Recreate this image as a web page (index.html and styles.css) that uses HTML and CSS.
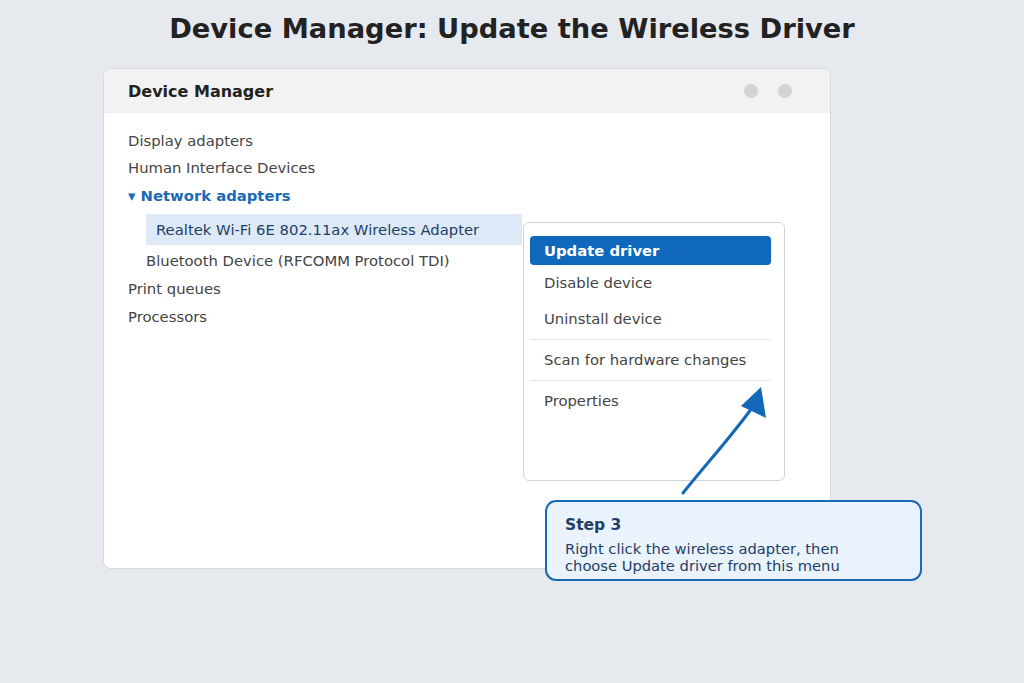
FILE: index.html
```html
<!DOCTYPE html>
<html>
<head>
<meta charset="utf-8">
<link rel="stylesheet" href="styles.css">
</head>
<body>
<h1 class="title">Device Manager: Update the Wireless Driver</h1>
<div class="stage">
  <div class="window">
    <div class="win-header">
      <span class="win-title">Device Manager</span>
      <span class="dots"><span class="dot"></span><span class="dot"></span></span>
    </div>
    <div class="tree">
      <div class="item">Display adapters</div>
      <div class="item">Human Interface Devices</div>
      <div class="item open">▾ Network adapters</div>
      <div class="child selected">Realtek Wi-Fi 6E 802.11ax Wireless Adapter</div>
      <div class="child after-selected">Bluetooth Device (RFCOMM Protocol TDI)</div>
      <div class="item">Print queues</div>
      <div class="item">Processors</div>
    </div>
    <div class="menu">
      <div class="menu-item active">Update driver</div>
      <div class="menu-item">Disable device</div>
      <div class="menu-item">Uninstall device</div>
      <div class="sep"></div>
      <div class="menu-item">Scan for hardware changes</div>
      <div class="sep"></div>
      <div class="menu-item">Properties</div>
    </div>
  </div>
  <svg class="arrow" width="1024" height="683" viewBox="0 0 1024 683">
    <path d="M683 493 C 708 462, 730 438, 752 408" fill="none" stroke="#1468b8" stroke-width="3" stroke-linecap="round"/>
    <polygon points="761,387 766,418 741,406" fill="#1468b8"/>
  </svg>
  <div class="callout">
    <div class="callout-title">Step 3</div>
    <div class="callout-text">Right click the wireless adapter, then<br>choose Update driver from this menu</div>
  </div>
</div>
</body>
</html>
```
FILE: styles.css
```css
html, body {
  margin: 0;
  padding: 0;
}
body {
  background: #e6e9ee;
  font-family: "DejaVu Sans", sans-serif;
  width: 1024px;
  height: 683px;
  overflow: hidden;
  position: relative;
}
.title {
  margin: 0;
  padding-top: 12px;
  text-align: center;
  font-size: 27.3px;
  line-height: 34px;
  font-weight: bold;
  color: #222222;
}
.stage {
  padding-left: 103px;
  padding-top: 22px;
}
.window {
  position: relative;
  width: 728px;
  height: 501px;
  background: #ffffff;
  border: 1px solid #d6d9de;
  border-radius: 8px;
  overflow: hidden;
  box-sizing: border-box;
}
.win-header {
  height: 44px;
  background: #f2f2f2;
  display: flex;
  align-items: center;
  justify-content: space-between;
  padding: 0 38px 0 24px;
}
.win-title {
  font-size: 16px;
  font-weight: bold;
  color: #222222;
}
.dots {
  display: flex;
  gap: 20px;
}
.dot {
  width: 14px;
  height: 14px;
  border-radius: 50%;
  background: #d3d3d3;
}
.tree {
  padding: 13.5px 0 0 24px;
  font-size: 14.8px;
  color: #444444;
}
.item {
  height: 27.5px;
  line-height: 27.5px;
}
.item.open {
  color: #1a6ab8;
  font-weight: bold;
}
.child {
  margin-left: 18px;
  height: 28px;
  line-height: 28px;
}
.child.selected {
  width: 376px;
  height: 31px;
  line-height: 31px;
  margin-top: 5px;
  padding-left: 10px;
  box-sizing: border-box;
  background: #dde9f7;
  color: #1f3f66;
}
.child.after-selected {
  margin-top: 2px;
}
.menu {
  position: absolute;
  left: 419px;
  top: 153px;
  width: 262px;
  height: 259px;
  box-sizing: border-box;
  background: #ffffff;
  border: 1px solid #cfd2d6;
  border-radius: 6px;
  padding: 13px 13px 0 6px;
  font-size: 14.8px;
  color: #444444;
}
.menu-item {
  height: 36px;
  line-height: 36px;
  padding-left: 14px;
}
.menu-item.active {
  height: 29px;
  line-height: 29px;
  background: #1068bd;
  color: #ffffff;
  font-weight: bold;
  border-radius: 4px;
}
.sep {
  height: 1px;
  background: #e2e2e2;
  margin: 2px 0;
}
.arrow {
  position: absolute;
  left: 0;
  top: 0;
  pointer-events: none;
}
.callout {
  position: absolute;
  left: 545px;
  top: 500px;
  width: 377px;
  height: 81px;
  box-sizing: border-box;
  background: #eaf2fc;
  border: 2px solid #1a69b5;
  border-radius: 11px;
  padding: 13px 18px 0 18px;
  color: #1f3f66;
}
.callout-title {
  font-size: 15.5px;
  font-weight: bold;
  line-height: 20px;
  margin-bottom: 5px;
}
.callout-text {
  font-size: 14.7px;
  line-height: 17px;
}
```
